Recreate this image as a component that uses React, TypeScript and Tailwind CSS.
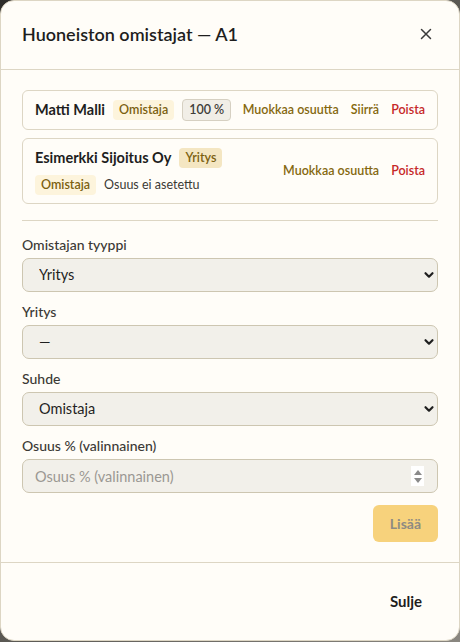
import { useState } from 'react'

const font = { fontFamily: 'Lato, "Noto Sans", sans-serif' }

function Chevron() {
  return (
    <svg width="12" height="12" viewBox="0 0 12 12" className="pointer-events-none shrink-0">
      <path d="M2.5 4.2 6 7.7l3.5-3.5" fill="none" stroke="#1f1f1f" strokeWidth="2.2" strokeLinecap="round" strokeLinejoin="round" />
    </svg>
  )
}

function SelectField({ label, value, options }: { label: string; value: string; options: string[] }) {
  const [current, setCurrent] = useState(value)
  return (
    <label className="flex flex-col gap-[4px]">
      <span className="text-[14px] leading-[18px] font-medium text-[#3b3935]">{label}</span>
      <div className="flex h-[34px] items-center rounded-[7px] border border-[#cdc6b1] bg-[#f2f0ea] pr-[2px]">
        <select
          value={current}
          onChange={(event) => setCurrent(event.target.value)}
          className="h-full flex-1 appearance-none bg-transparent pl-[16px] text-[14.5px] text-[#1f1f1f] outline-none"
          style={font}
        >
          {options.map((option) => (
            <option key={option}>{option}</option>
          ))}
        </select>
        <Chevron />
      </div>
    </label>
  )
}

function Badge({ children, tone }: { children: string; tone: 'role' | 'type' | 'share' }) {
  const cls =
    tone === 'role'
      ? 'bg-[#fdf4dc] text-[#7b6010]'
      : tone === 'type'
        ? 'bg-[#f4e6c2] text-[#7b6010]'
        : 'border border-[#d6d0c2] bg-[#f1eee7] text-[#3f3d39]'
  return (
    <span className={`whitespace-nowrap rounded-[4px] px-[6px] py-[1px] text-[12.5px] leading-[18px] font-semibold ${cls}`}>
      {children}
    </span>
  )
}

export default function App() {
  return (
    <div className="h-[642px] w-[460px] bg-gradient-to-br from-[#2e2d2a] to-[#8a8780]" style={font}>
      <div className="flex h-[641px] flex-col rounded-[14px] border border-[#ddd6c4] bg-[#fffdf8]">
        <div className="flex h-[69px] items-center justify-between border-b border-[#ddd6c4] pb-[2px] pl-[21px] pr-[26px]">
          <h2 className="text-[18px] font-semibold text-[#1e1e1e]">Huoneiston omistajat — A1</h2>
          <button className="text-[#3a3a3a]" aria-label="Sulje">
            <svg width="14" height="14" viewBox="0 0 14 14">
              <path d="M2.5 2.5l9 9M11.5 2.5l-9 9" stroke="currentColor" strokeWidth="1.5" strokeLinecap="round" />
            </svg>
          </button>
        </div>

        <div className="flex flex-1 flex-col px-[21px] pt-[20px]">
          <div className="flex flex-col gap-[8px]">
            <div className="flex h-[40px] items-center justify-between whitespace-nowrap rounded-[6px] border border-[#ddd6c4] px-[12px]">
              <div className="flex items-center gap-[8px]">
                <span className="text-[14.5px] font-bold text-[#1e1e1e]">Matti Malli</span>
                <Badge tone="role">Omistaja</Badge>
                <Badge tone="share">100 %</Badge>
              </div>
              <div className="flex items-center gap-[12px] text-[12.5px] font-semibold">
                <button className="text-[#85680f]">Muokkaa osuutta</button>
                <button className="text-[#85680f]">Siirrä</button>
                <button className="text-[#c62828]">Poista</button>
              </div>
            </div>

            <div className="flex h-[66px] items-center justify-between whitespace-nowrap rounded-[6px] border border-[#ddd6c4] px-[12px]">
              <div className="flex flex-col gap-[7px]">
                <div className="flex items-center gap-[8px]">
                  <span className="text-[14.5px] font-bold text-[#1e1e1e]">Esimerkki Sijoitus Oy</span>
                  <Badge tone="type">Yritys</Badge>
                </div>
                <div className="flex items-center gap-[8px]">
                  <Badge tone="role">Omistaja</Badge>
                  <span className="text-[12.5px] text-[#3b3935]">Osuus ei asetettu</span>
                </div>
              </div>
              <div className="flex items-center gap-[12px] text-[12.5px] font-semibold">
                <button className="text-[#85680f]">Muokkaa osuutta</button>
                <button className="text-[#c62828]">Poista</button>
              </div>
            </div>
          </div>

          <div className="mt-[16px] border-t border-[#ddd6c4]" />

          <div className="mt-[15px] flex flex-col gap-[11px]">
            <SelectField label="Omistajan tyyppi" value="Yritys" options={['Henkilö', 'Yritys']} />
            <SelectField label="Yritys" value="—" options={['—', 'Esimerkki Sijoitus Oy']} />
            <SelectField label="Suhde" value="Omistaja" options={['Omistaja', 'Haltija']} />
            <label className="flex flex-col gap-[4px]">
              <span className="text-[14px] leading-[18px] font-medium text-[#3b3935]">Osuus % (valinnainen)</span>
              <div className="flex h-[34px] items-center rounded-[7px] border border-[#cdc6b1] bg-[#f2f0ea] pr-[13px]">
                <input
                  type="text"
                  placeholder="Osuus % (valinnainen)"
                  className="h-full flex-1 bg-transparent pl-[12px] text-[14.5px] text-[#1f1f1f] outline-none placeholder:text-[#9b9893]"
                  style={font}
                />
                <span className="flex h-[20px] w-[13px] flex-col items-center justify-center gap-[3px] bg-white">
                  <svg width="8" height="5" viewBox="0 0 8 5"><path d="M4 0 8 5H0z" fill="#8a8a8a" /></svg>
                  <svg width="8" height="5" viewBox="0 0 8 5"><path d="M0 0h8L4 5z" fill="#8a8a8a" /></svg>
                </span>
              </div>
            </label>
          </div>

          <div className="mt-[12px] flex justify-end">
            <button className="h-[37px] rounded-[6px] bg-[#f7d27c] px-[17px] text-[14px] font-bold text-[#8e8b82]">Lisää</button>
          </div>
        </div>

        <div className="flex h-[78px] items-center justify-end border-t border-[#ddd6c4] pr-[37px]">
          <button className="text-[15px] font-bold text-[#1e1e1e]">Sulje</button>
        </div>
      </div>
    </div>
  )
}
